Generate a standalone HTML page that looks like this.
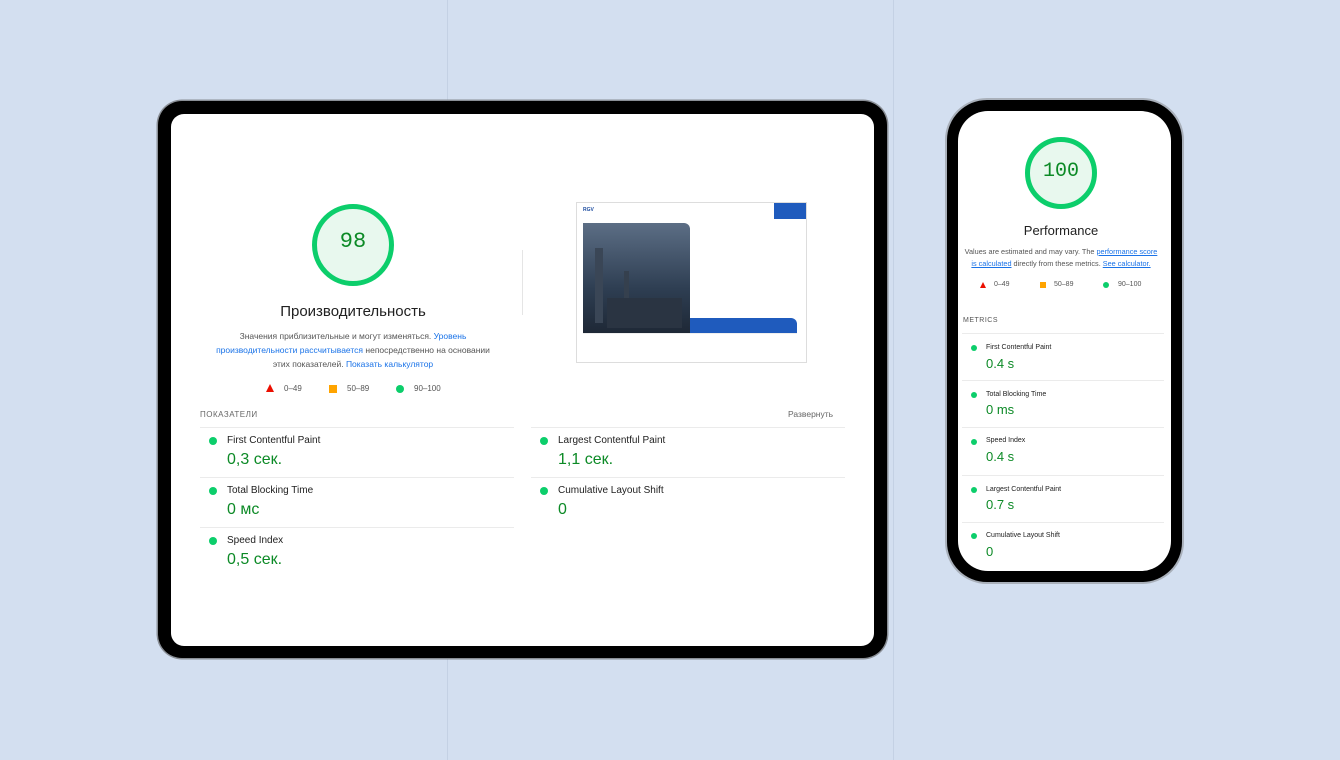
<!DOCTYPE html>
<html><head><meta charset="utf-8"><style>
*{margin:0;padding:0;box-sizing:border-box}
body{width:1340px;height:760px;background:#d3dff0;position:relative;overflow:hidden;font-family:"Liberation Sans",Arial,sans-serif;color:#212121}
.a{position:absolute}
.vl{position:absolute;top:0;width:1px;height:760px;background:#c4d1e4}
.tab{left:158px;top:101px;width:729px;height:557px;background:#000;border-radius:24px;box-shadow:0 0 0 1.5px #8a8f96}
.tscr{left:171px;top:114px;width:703px;height:532px;background:#fff;border-radius:13px;overflow:hidden}
.ph{left:947px;top:100px;width:235px;height:482px;background:#000;border-radius:40px;box-shadow:0 0 0 2px #a9b0ba}
.pscr{left:958px;top:111px;width:213px;height:460px;background:#fff;border-radius:30px;overflow:hidden}
.g{color:#0c8a26}
.dot{position:absolute;width:8px;height:8px;border-radius:50%;background:#0cce6b}
.line{position:absolute;height:1px;background:#ebebeb}
.lbl{font-size:10px;color:#212121}
a{color:#1a73e8;text-decoration:none}
</style></head><body>
<div class="vl" style="left:447px"></div>
<div class="vl" style="left:893px"></div>

<div class="a tab"></div>
<div class="a tscr">
  <div class="a" style="left:141px;top:90px;width:82px;height:82px;border-radius:50%;border:5px solid #0cce6b;background:#e8f8ee"></div>
  <div class="a" style="left:141px;top:115px;width:82px;text-align:center;font-family:'Liberation Mono',monospace;font-size:22px;color:#0c8a26">98</div>
  <div class="a" style="left:60px;top:189px;width:244px;text-align:center;font-size:15px;color:#212121">Производительность</div>
  <div class="a" style="left:44px;top:215px;width:276px;text-align:center;font-size:8.5px;line-height:14px;color:#555">Значения приблизительные и могут изменяться. <a>Уровень производительности рассчитывается</a> непосредственно на основании этих показателей. <a>Показать калькулятор</a></div>
  <div class="a" style="left:95px;top:270px;width:0;height:0;border-left:4px solid transparent;border-right:4px solid transparent;border-bottom:8px solid #eb0f00"></div>
  <div class="a" style="left:113px;top:270px;font-size:8px;color:#555">0–49</div>
  <div class="a" style="left:158px;top:271px;width:8px;height:8px;background:#ffa400"></div>
  <div class="a" style="left:176px;top:270px;font-size:8px;color:#555">50–89</div>
  <div class="dot" style="left:225px;top:271px"></div>
  <div class="a" style="left:243px;top:270px;font-size:8px;color:#555">90–100</div>
  <div class="a" style="left:351px;top:136px;width:1px;height:65px;background:#e5e5e5"></div>
  <div class="a" style="left:405px;top:88px;width:231px;height:161px;border:1px solid #ddd;background:#fff">
    <div class="a" style="left:6px;top:4px;font-size:5px;color:#1a4a9e;font-weight:bold">RGV</div>
    <div class="a" style="left:197px;top:0;width:32px;height:16px;background:#1f5bbd"></div>
    <div class="a" style="left:6px;top:20px;width:107px;height:110px;border-radius:0 6px 0 0;background:linear-gradient(#5c6e85,#2e3e52 60%,#1e2836)"></div>
    <div class="a" style="left:18px;top:45px;width:8px;height:75px;background:#3a4656"></div>
    <div class="a" style="left:47px;top:68px;width:5px;height:55px;background:#35404e"></div>
    <div class="a" style="left:30px;top:95px;width:75px;height:30px;background:#2a3442"></div>
    <div class="a" style="left:113px;top:115px;width:107px;height:15px;border-radius:0 6px 0 0;background:#1f5bbd"></div>
    <div class="a" style="left:6px;top:130px;width:214px;height:1px;background:#eee"></div>
  </div>
  <div class="a" style="left:29px;top:296px;font-size:8px;letter-spacing:.5px;color:#666">ПОКАЗАТЕЛИ</div>
  <div class="a" style="left:617px;top:295px;font-size:8.5px;color:#666">Развернуть</div>
  <div class="line" style="left:29px;top:313px;width:314px"></div>
  <div class="line" style="left:360px;top:313px;width:314px"></div>
  <div class="dot" style="left:38px;top:323px"></div><div class="a lbl" style="left:56px;top:321px">First Contentful Paint</div>
  <div class="a g" style="left:56px;top:337px;font-size:16px">0,3 сек.</div>
  <div class="line" style="left:29px;top:363px;width:314px"></div>
  <div class="dot" style="left:38px;top:373px"></div><div class="a lbl" style="left:56px;top:371px">Total Blocking Time</div>
  <div class="a g" style="left:56px;top:387px;font-size:16px">0 мс</div>
  <div class="line" style="left:29px;top:413px;width:314px"></div>
  <div class="dot" style="left:38px;top:423px"></div><div class="a lbl" style="left:56px;top:421px">Speed Index</div>
  <div class="a g" style="left:56px;top:437px;font-size:16px">0,5 сек.</div>
  <div class="dot" style="left:369px;top:323px"></div><div class="a lbl" style="left:387px;top:321px">Largest Contentful Paint</div>
  <div class="a g" style="left:387px;top:337px;font-size:16px">1,1 сек.</div>
  <div class="line" style="left:360px;top:363px;width:314px"></div>
  <div class="dot" style="left:369px;top:373px"></div><div class="a lbl" style="left:387px;top:371px">Cumulative Layout Shift</div>
  <div class="a g" style="left:387px;top:387px;font-size:16px">0</div>
</div>

<div class="a ph"></div>
<div class="a pscr">
  <div class="a" style="left:67px;top:26px;width:72px;height:72px;border-radius:50%;border:5px solid #0cce6b;background:#e8f8ee"></div>
  <div class="a" style="left:67px;top:49px;width:72px;text-align:center;font-family:'Liberation Mono',monospace;font-size:20px;color:#0c8a26">100</div>
  <div class="a" style="left:0;top:112px;width:206px;text-align:center;font-size:13px">Performance</div>
  <div class="a" style="left:6px;top:135px;width:194px;text-align:center;font-size:7.3px;line-height:12px;color:#555">Values are estimated and may vary. The <a style="text-decoration:underline">performance score</a> <a style="text-decoration:underline">is calculated</a> directly from these metrics. <a style="text-decoration:underline">See calculator.</a></div>
  <div class="a" style="left:22px;top:171px;width:0;height:0;border-left:3px solid transparent;border-right:3px solid transparent;border-bottom:6px solid #eb0f00"></div>
  <div class="a" style="left:36px;top:170px;font-size:7px;color:#555">0–49</div>
  <div class="a" style="left:82px;top:171px;width:6px;height:6px;background:#ffa400"></div>
  <div class="a" style="left:96px;top:170px;font-size:7px;color:#555">50–89</div>
  <div class="dot" style="left:145px;top:171px;width:6px;height:6px"></div>
  <div class="a" style="left:160px;top:170px;font-size:7px;color:#555">90–100</div>
  <div class="a" style="left:5px;top:206px;font-size:7px;letter-spacing:.5px;color:#555">METRICS</div>
  <div class="line" style="left:4px;top:222px;width:202px"></div>
  <div class="dot" style="left:13px;top:234px;width:6px;height:6px"></div><div class="a" style="left:28px;top:233px;font-size:7px">First Contentful Paint</div>
  <div class="a g" style="left:28px;top:245px;font-size:13px">0.4 s</div>
  <div class="line" style="left:4px;top:269px;width:202px"></div>
  <div class="dot" style="left:13px;top:281px;width:6px;height:6px"></div><div class="a" style="left:28px;top:280px;font-size:7px">Total Blocking Time</div>
  <div class="a g" style="left:28px;top:291px;font-size:13px">0 ms</div>
  <div class="line" style="left:4px;top:316px;width:202px"></div>
  <div class="dot" style="left:13px;top:328px;width:6px;height:6px"></div><div class="a" style="left:28px;top:326px;font-size:7px">Speed Index</div>
  <div class="a g" style="left:28px;top:338px;font-size:13px">0.4 s</div>
  <div class="line" style="left:4px;top:364px;width:202px"></div>
  <div class="dot" style="left:13px;top:376px;width:6px;height:6px"></div><div class="a" style="left:28px;top:375px;font-size:7px">Largest Contentful Paint</div>
  <div class="a g" style="left:28px;top:386px;font-size:13px">0.7 s</div>
  <div class="line" style="left:4px;top:411px;width:202px"></div>
  <div class="dot" style="left:13px;top:422px;width:6px;height:6px"></div><div class="a" style="left:28px;top:421px;font-size:7px">Cumulative Layout Shift</div>
  <div class="a g" style="left:28px;top:433px;font-size:13px">0</div>
</div>
</body></html>
